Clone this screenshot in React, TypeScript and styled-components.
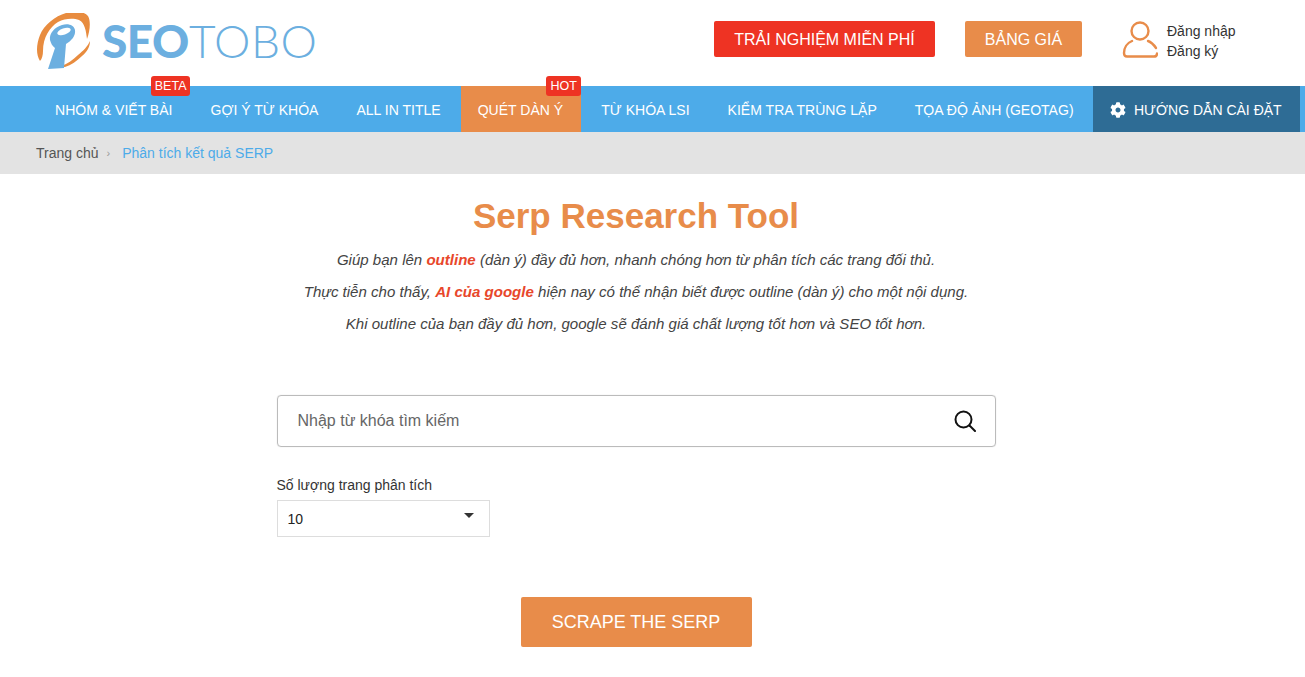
import React from 'react';
import styled, { createGlobalStyle } from 'styled-components';
import { FaCog } from 'react-icons/fa';

const GlobalStyle = createGlobalStyle`
  html, body {
    margin: 0;
    padding: 0;
    background: #fff;
    font-family: "Liberation Sans", Arial, sans-serif;
    color: #333;
    overflow: hidden;
  }
  * {
    box-sizing: border-box;
  }
`;

const orange = '#e88c4a';
const red = '#ee3323';
const blue = '#4dabe9';

const Page = styled.div`
  width: 1305px;
  height: 677px;
  overflow: hidden;
`;

const TopBar = styled.header`
  height: 86px;
  display: flex;
  align-items: center;
  padding: 0 0 8px 36px;
`;

const Logo = styled.div`
  display: flex;
  align-items: center;
  gap: 10px;
  width: 678px;
  padding-top: 3px;
`;

const LogoText = styled.div`
  font-family: "Lato", sans-serif;
  font-size: 46px;
  line-height: 1;
  color: #6cafe0;
  font-weight: 300;
  letter-spacing: 0.5px;

  b {
    font-weight: 900;
    letter-spacing: -0.5px;
  }
`;

const TopButton = styled.a<{ $color: string; $width: number }>`
  width: ${({ $width }) => $width}px;
  height: 36px;
  display: flex;
  align-items: center;
  justify-content: center;
  padding-top: 1px;
  background: ${({ $color }) => $color};
  color: #fff;
  font-size: 16px;
  border-radius: 2px;
`;

const TopActions = styled.div`
  display: flex;
  align-items: center;
`;

const PriceSlot = styled.div`
  margin-left: 30px;
`;

const Account = styled.div`
  display: flex;
  align-items: center;
  margin-left: 39px;
  gap: 9px;
`;

const AccountLinks = styled.div`
  display: flex;
  flex-direction: column;
  gap: 4px;
  padding-top: 4px;
  font-size: 14px;
  line-height: 16px;
  color: #333;
`;

const Nav = styled.nav`
  height: 46px;
  background: ${blue};
  display: flex;
  padding-left: 36px;
`;

const NavItem = styled.a<{ $active?: boolean }>`
  position: relative;
  display: flex;
  align-items: center;
  height: 100%;
  padding: 2px ${({ $active }) => ($active ? '18px 0 17px' : '19px 0')};
  margin: 0 ${({ $active }) => ($active ? 1 : 0)}px;
  background: ${({ $active }) => ($active ? orange : 'transparent')};
  color: #fff;
  font-size: 14.04px;
  white-space: nowrap;
`;

const Badge = styled.span<{ $right: number }>`
  position: absolute;
  top: -10px;
  right: ${({ $right }) => $right}px;
  height: 20px;
  min-width: 35px;
  padding: 0 4px;
  display: flex;
  align-items: center;
  justify-content: center;
  background: ${red};
  border-radius: 3px;
  color: #fff;
  font-size: 12.5px;
`;

const GuideItem = styled.a`
  flex: 0 0 207px;
  margin-left: auto;
  margin-right: 5px;
  height: 100%;
  display: flex;
  align-items: center;
  gap: 8px;
  padding: 2px 0 0 17px;
  background: #2e6c95;
  color: #fff;
  font-size: 14px;
  white-space: nowrap;
`;

const Breadcrumb = styled.div`
  height: 42px;
  background: #e3e3e3;
  padding-left: 36px;
  display: flex;
  align-items: center;
  font-size: 14px;
  color: #555;
`;

const CrumbSeparator = styled.span`
  margin: 0 12px 0 8px;
  font-size: 11px;
  color: #999;
`;

const CrumbLink = styled.a`
  color: ${blue};
`;

const Main = styled.main`
  width: 1272px;
  display: flex;
  flex-direction: column;
  align-items: center;
`;

const Title = styled.h1`
  margin: 21px 0 0;
  font-size: 35px;
  line-height: 42px;
  font-weight: 700;
  color: ${orange};
`;

const Intro = styled.div`
  margin-top: 13px;
  display: flex;
  flex-direction: column;
  gap: 12px;
  align-items: center;
  font-size: 15.05px;
  line-height: 20px;
  font-style: italic;
  color: #444;

  b {
    color: #e8472b;
  }
`;

const SearchBox = styled.div`
  margin-top: 61px;
  width: 719px;
  height: 52px;
  border: 1px solid #bbb;
  border-radius: 4px;
  box-shadow: 0 0 1px #ccc;
  display: flex;
  align-items: center;
  justify-content: space-between;
  padding: 0 19px 0 20px;
  font-size: 16px;
  color: #666;
`;

const FormRow = styled.div`
  width: 719px;
  margin-top: 30px;
`;

const FieldLabel = styled.div`
  font-size: 14px;
  line-height: 17px;
  color: #333;
`;

const SelectBox = styled.div`
  position: relative;
  margin-top: 6px;
  width: 213px;
  height: 37px;
  border: 1px solid #ddd;
  display: flex;
  align-items: center;
  padding-left: 10px;
  font-size: 14px;
  color: #222;
`;

const SelectCaret = styled.span`
  position: absolute;
  right: 15px;
  top: 12px;
  border-left: 5px solid transparent;
  border-right: 5px solid transparent;
  border-top: 5px solid #333;
`;

const ScrapeButton = styled.a`
  margin-top: 60px;
  width: 231px;
  height: 50px;
  display: flex;
  align-items: center;
  justify-content: center;
  background: ${orange};
  color: #fff;
  font-size: 18px;
  border-radius: 2px;
`;

const LogoMark = () => (
  <svg width="56" height="56" viewBox="6 8 56 56">
    <path
      d="M10 56C6 50 6 40 10 30 14 20 25 11 36 8c9-2 18-2 22 3 3 5 2 15-1 23-1-8-2-16-8-19-5-2-14-2-21 2-8 5-15 15-15 29 0 4-1 8-3 10Z"
      fill="#e88c3f"
    />
    <path d="M60 36c0 6-3 11-8 15-5 5-11 9-17 11-2 0-3 0-4-1 6-2 12-6 17-11 5-4 10-9 12-14Z" fill="#e88c3f" />
    <path
      d="M20 35c-1-7 5-13 12-15 6-2 12 0 13 5 1 6-4 11-9 14l-2 24-16 1 7-21c-3-2-4-5-5-8Z"
      fill="#6cafe0"
    />
    <ellipse cx="34" cy="26.5" rx="7" ry="3.2" transform="rotate(-18 34 26.5)" fill="#fff" />
  </svg>
);

const UserIcon = () => (
  <svg width="37" height="38" viewBox="10 10 37 38" fill="none" stroke="#e88c4a" strokeWidth="2.4" strokeLinecap="round">
    <circle cx="29" cy="21" r="8.5" />
    <path d="M21 31C16 33 13 38 13 43c0 2 1 3.5 3 3.5h27c2 0 3-1 3-3" />
    <path d="M37 31c3 1 6 4 8 7" />
  </svg>
);

const SearchIcon = () => (
  <svg width="22" height="22" viewBox="0 0 22 22" fill="none" stroke="#111" strokeWidth="2">
    <circle cx="9.5" cy="9.5" r="8" />
    <path d="M15.5 15.5 21 21" strokeLinecap="round" />
  </svg>
);

const navItems = [
  { label: 'NHÓM & VIẾT BÀI', badge: 'BETA', badgeRight: 1 },
  { label: 'GỢI Ý TỪ KHÓA' },
  { label: 'ALL IN TITLE' },
  { label: 'QUÉT DÀN Ý', badge: 'HOT', badgeRight: 0, active: true },
  { label: 'TỪ KHÓA LSI' },
  { label: 'KIỂM TRA TRÙNG LẶP' },
  { label: 'TỌA ĐỘ ẢNH (GEOTAG)' }
];

const App: React.FC = () => (
  <Page>
    <GlobalStyle />
    <TopBar>
      <Logo>
        <LogoMark />
        <LogoText>
          <b>SEO</b>TOBO
        </LogoText>
      </Logo>
      <TopActions>
        <TopButton $color={red} $width={221}>
          TRẢI NGHIỆM MIỄN PHÍ
        </TopButton>
        <PriceSlot>
          <TopButton $color={orange} $width={117}>
            BẢNG GIÁ
          </TopButton>
        </PriceSlot>
        <Account>
          <UserIcon />
          <AccountLinks>
            <span>Đăng nhập</span>
            <span>Đăng ký</span>
          </AccountLinks>
        </Account>
      </TopActions>
    </TopBar>
    <Nav>
      {navItems.map(item => (
        <NavItem key={item.label} $active={item.active}>
          {item.label}
          {item.badge && <Badge $right={item.badgeRight ?? 0}>{item.badge}</Badge>}
        </NavItem>
      ))}
      <GuideItem>
        <FaCog size={16} />
        HƯỚNG DẪN CÀI ĐẶT
      </GuideItem>
    </Nav>
    <Breadcrumb>
      Trang chủ
      <CrumbSeparator>›</CrumbSeparator>
      <CrumbLink>Phân tích kết quả SERP</CrumbLink>
    </Breadcrumb>
    <Main>
      <Title>Serp Research Tool</Title>
      <Intro>
        <span>
          Giúp bạn lên <b>outline</b> (dàn ý) đầy đủ hơn, nhanh chóng hơn từ phân tích các trang đối thủ.
        </span>
        <span>
          Thực tiễn cho thấy, <b>AI của google</b> hiện nay có thể nhận biết được outline (dàn ý) cho một nội dụng.
        </span>
        <span>Khi outline của bạn đầy đủ hơn, google sẽ đánh giá chất lượng tốt hơn và SEO tốt hơn.</span>
      </Intro>
      <SearchBox>
        Nhập từ khóa tìm kiếm
        <SearchIcon />
      </SearchBox>
      <FormRow>
        <FieldLabel>Số lượng trang phân tích</FieldLabel>
        <SelectBox>
          10
          <SelectCaret />
        </SelectBox>
      </FormRow>
      <ScrapeButton>SCRAPE THE SERP</ScrapeButton>
    </Main>
  </Page>
);

export default App;
